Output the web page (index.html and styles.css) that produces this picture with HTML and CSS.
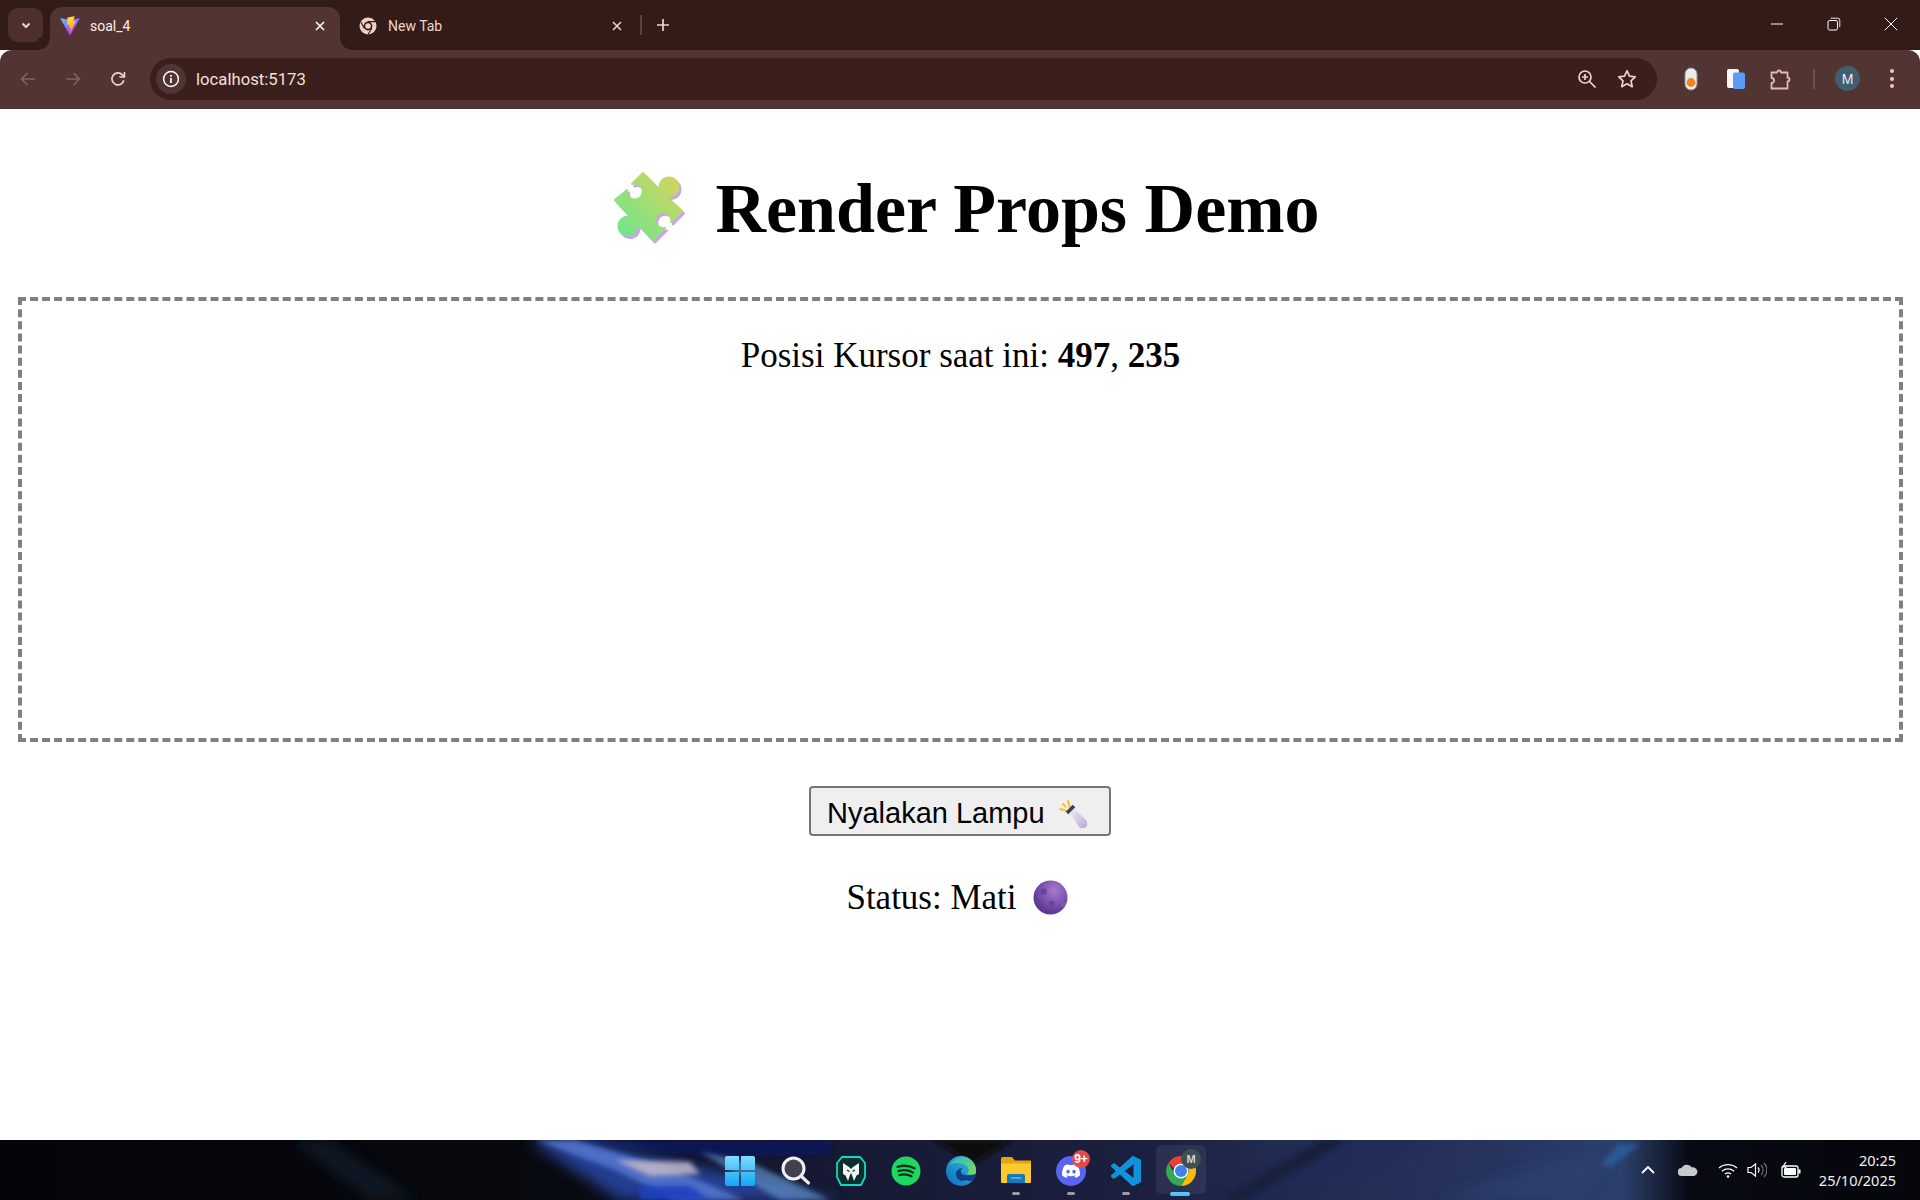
FILE: index.html
```html
<!DOCTYPE html>
<html lang="id">
<head>
<meta charset="utf-8">
<title>soal_4</title>
<link rel="stylesheet" href="styles.css">
</head>
<body>
<header class="browser">
  <div class="tabstrip">
    <button class="tabsearch" aria-label="Search tabs">
      <svg width="12" height="12" viewBox="0 0 12 12"><path d="M2.5 4.5 6 8l3.5-3.5" class="ic-light" stroke-width="2"/></svg>
    </button>
    <div class="tab tab-active">
      <svg class="favicon" width="20" height="20" viewBox="0 0 410 404"><defs><linearGradient id="va" x1="6" y1="33" x2="235" y2="344" gradientUnits="userSpaceOnUse"><stop stop-color="#41D1FF"/><stop offset="1" stop-color="#BD34FE"/></linearGradient><linearGradient id="vb" x1="194" y1="8" x2="236" y2="292" gradientUnits="userSpaceOnUse"><stop stop-color="#FFEA83"/><stop offset=".08" stop-color="#FFDD35"/><stop offset="1" stop-color="#FFA800"/></linearGradient></defs><path d="M399.641 59.5246L215.643 388.545C211.844 395.338 202.084 395.378 198.228 388.618L10.5817 59.5563C6.38087 52.1896 12.6802 43.2665 21.0281 44.7586L205.223 77.6824C206.398 77.8924 207.601 77.8904 208.776 77.6763L389.119 44.8058C397.439 43.2894 403.768 52.1434 399.641 59.5246Z" fill="url(#va)"/><path d="M292.965 1.5744L156.801 28.2552C154.563 28.6937 152.906 30.5903 152.771 32.8664L144.395 174.33C144.198 177.662 147.258 180.248 150.51 179.498L188.42 170.749C191.967 169.931 195.172 173.055 194.443 176.622L183.18 231.775C182.422 235.487 185.907 238.661 189.532 237.56L212.947 230.446C216.577 229.344 220.065 232.527 219.297 236.242L201.398 322.875C200.278 328.294 207.486 331.249 210.492 326.603L212.5 323.5L323.454 102.072C325.312 98.3645 322.108 94.137 318.036 94.9228L279.014 102.454C275.347 103.161 272.227 99.746 273.262 96.1583L298.731 7.86689C299.767 4.27314 296.636 0.855181 292.965 1.5744Z" fill="url(#vb)"/></svg>
      <span class="tab-title">soal_4</span>
      <svg width="12" height="12" viewBox="0 0 12 12"><path d="M2 2l8 8M10 2l-8 8" class="ic-white" stroke-width="1.6"/></svg>
    </div>
    <div class="tab tab-idle">
      <svg class="favicon" width="18" height="18" viewBox="0 0 18 18"><circle cx="9" cy="9" r="8.5" fill="#f0cfc4"/><circle cx="9" cy="9" r="4.4" fill="#331b18"/><circle cx="9" cy="9" r="2.8" fill="#f0cfc4"/><path d="M9 4.6h7.4M5.2 11.200 1.800 5M12.800 11.200 9 17.500" stroke="#331b18" stroke-width="1.100" fill="none"/></svg>
      <span class="tab-title tab-title-dim">New Tab</span>
      <svg width="12" height="12" viewBox="0 0 12 12"><path d="M2 2l8 8M10 2l-8 8" class="ic-light" stroke-width="1.6"/></svg>
    </div>
    <span class="tab-divider"></span>
    <svg class="newtab" width="14" height="14" viewBox="0 0 14 14"><path d="M7 1v12M1 7h12" class="ic-light" stroke-width="1.7"/></svg>
    <div class="winctl">
      <span class="winbtn"><svg width="14" height="14" viewBox="0 0 14 14"><path d="M1 7h12" class="ic-white" stroke-width="1"/></svg></span>
      <span class="winbtn"><svg width="14" height="14" viewBox="0 0 14 14"><rect x="1" y="3.5" width="9.5" height="9.5" rx="1.6" class="ic-white"/><path d="M3.6 1.2h7.2a2 2 0 0 1 2 2v7" class="ic-white" stroke-width=".9"/></svg></span>
      <span class="winbtn"><svg width="14" height="14" viewBox="0 0 14 14"><path d="M.8.8l12.4 12.4M13.2.8.8 13.2" class="ic-white" stroke-width="1"/></svg></span>
    </div>
  </div>
  <div class="toolbar">
    <span class="navbtn"><svg width="18" height="18" viewBox="0 0 18 18"><path d="M16 9H3M8.5 3 2.6 9l5.9 6" class="ic-dim" stroke-width="1.7"/></svg></span>
    <span class="navbtn"><svg width="18" height="18" viewBox="0 0 18 18"><path d="M2 9h13M9.5 3l5.9 6-5.9 6" class="ic-dim" stroke-width="1.7"/></svg></span>
    <span class="navbtn"><svg width="18" height="18" viewBox="0 0 18 18"><path d="M14.8 10.2A6 6 0 1 1 13.3 4.8L15 6.6" class="ic-light" stroke-width="1.7"/><path d="M15.4 2v5h-5" class="ic-light" stroke-width="1.7"/></svg></span>
    <div class="omnibox">
      <span class="siteinfo"><svg width="18" height="18" viewBox="0 0 18 18"><circle cx="9" cy="9" r="7.4" class="ic-white" stroke-width="1.5"/><path d="M9 8v5M9 5v1.8" class="ic-white" stroke-width="1.7"/></svg></span>
      <span class="url">localhost:5173</span>
      <span class="omni-ic"><svg width="20" height="20" viewBox="0 0 20 20"><circle cx="8" cy="8" r="6" class="ic-light" stroke-width="1.7"/><path d="M12.5 12.5 18.5 18.5M5 8h6M8 5v6" class="ic-light" stroke-width="1.7"/></svg></span>
      <span class="omni-ic"><svg width="20" height="20" viewBox="0 0 20 20"><path d="M10 1.8l2.5 5.4 5.8.7-4.3 4 1.2 5.8-5.2-2.9-5.2 2.9 1.2-5.8-4.3-4 5.8-.7z" class="ic-light" stroke-width="1.7" stroke-linejoin="round"/></svg></span>
    </div>
    <span class="ext ext-first"><svg width="14" height="24" viewBox="0 0 14 24"><rect x="1" y="1" width="12" height="22" rx="6" fill="#ececec" stroke="#8b9a9e"/><circle cx="7" cy="15.5" r="4.4" fill="#f58220"/></svg></span>
    <span class="ext"><svg width="18" height="20" viewBox="0 0 18 20"><rect x="0" y="0" width="12" height="19" rx="2" fill="#f8f8fa"/><rect x="6" y="3.5" width="12" height="16.5" rx="2" fill="#5a9bf6"/></svg></span>
    <span class="ext"><svg width="22" height="22" viewBox="0 0 22 22"><path d="M1.5 4.5h5.5a2 2 0 0 1 4 0h6.5v5a2 2 0 0 1 0 4v7h-16v-5.5a2.5 2.5 0 0 0 0-5z" class="ic-pink" stroke-width="1.8" stroke-linejoin="round"/></svg></span>
    <span class="tb-divider"></span>
    <span class="avatar">M</span>
    <span class="menu-dots"><i></i><i></i><i></i></span>
  </div>
</header>

<main class="page">
  <h1 class="title">
    <svg class="puzzle" viewBox="14 12 72 72" aria-hidden="true"><defs><linearGradient id="pz" x1="0" y1="1" x2="1" y2="0"><stop offset="0" stop-color="#64e88f"/><stop offset="1" stop-color="#dcd35a"/></linearGradient></defs><path class="pz-shadow" d="M43 13 60 30A9.500 9.500 0 1 1 66 36L82 51 71 62A8 8 0 1 0 65 68L53 80 37 63A9.500 9.500 0 1 1 31 57L15 40 27 30A8 8 0 1 0 32 24Z"/><path class="pz-face" d="M43 13 60 30A9.500 9.500 0 1 1 66 36L82 51 71 62A8 8 0 1 0 65 68L53 80 37 63A9.500 9.500 0 1 1 31 57L15 40 27 30A8 8 0 1 0 32 24Z"/></svg>
    <span>Render Props Demo</span>
  </h1>
  <section class="tracker">
    <p class="cursor">Posisi Kursor saat ini: <strong>497</strong>, <strong>235</strong></p>
  </section>
  <button class="lamp">Nyalakan Lampu
    <svg class="torch" viewBox="0 0 30 30" aria-hidden="true"><defs><linearGradient id="tg" x1="0" y1="0" x2="1" y2="1"><stop offset="0" stop-color="#f5f0f8"/><stop offset="1" stop-color="#b9a8d0"/></linearGradient></defs><path d="M11 3l2 7M3 11l7 2" stroke="#fbbf2d" stroke-width="2" fill="none" stroke-linecap="round"/><path d="M5.500 5.500 9 9" stroke="#fbbf2d" stroke-width="2"/><path d="M12 13l4-4 13 13a3 3 0 0 1-7 7z" fill="url(#tg)"/><path d="M10 15 17 8" stroke="#473a5c" stroke-width="3.600"/></svg>
  </button>
  <p class="status">Status: Mati
    <svg class="moon" viewBox="0 0 36 36" aria-hidden="true"><defs><radialGradient id="mg" cx=".62" cy=".3" r=".8"><stop offset="0" stop-color="#a67ad0"/><stop offset=".6" stop-color="#7149a6"/><stop offset="1" stop-color="#4d2f82"/></radialGradient></defs><circle cx="18" cy="18" r="17.500" fill="url(#mg)"/><circle cx="11" cy="12" r="3.200" fill="#6a449c"/><circle cx="19" cy="24" r="3" fill="#6a449c"/><circle cx="24" cy="6" r="1.800" fill="#9a70c4"/><circle cx="31" cy="25" r="2.500" fill="#805aac"/><circle cx="9" cy="25" r="1.600" fill="#63409a"/></svg>
  </p>
</main>

<footer class="taskbar">
  <svg class="wallpaper" width="1920" height="60" viewBox="0 0 1920 60" aria-hidden="true">
    <defs>
      <linearGradient id="wb" x1="0" y1="0" x2="1" y2="0">
        <stop offset="0" stop-color="#04050a"/><stop offset=".27" stop-color="#07090f"/><stop offset=".33" stop-color="#0b0d18"/><stop offset=".4" stop-color="#15182f"/><stop offset=".6" stop-color="#1c2040"/><stop offset=".66" stop-color="#212a50"/><stop offset=".78" stop-color="#273460"/><stop offset=".845" stop-color="#2c406c"/><stop offset=".88" stop-color="#080a14"/><stop offset="1" stop-color="#05060b"/>
      </linearGradient>
      <filter id="b2" x="-20%" y="-50%" width="140%" height="200%"><feGaussianBlur stdDeviation="2.500"/></filter>
      <filter id="b6" x="-30%" y="-100%" width="160%" height="300%"><feGaussianBlur stdDeviation="7"/></filter>
    </defs>
    <rect width="1920" height="60" fill="url(#wb)"/>
    <path d="M290 0h40l90 60h-50z" fill="#0c1520" filter="url(#b6)"/>
    <path d="M566 0H830V14L720 18Z" fill="#0b1254" filter="url(#b2)"/>
    <path d="M528 0h60L840 60H620Z" fill="#2a4cb0" opacity=".8" filter="url(#b6)"/>
    <path d="M535 0h40l100 30 70 30h-70l-60-30Z" fill="#5b7fd8" opacity=".75" filter="url(#b2)"/>
    <path d="M615 20 690 22 700 34 650 36Z" fill="#c4b8c8" opacity=".85" filter="url(#b2)"/>
    <path d="M700 12l50 10 80 38h-50l-50-30z" fill="#6aa0d8" opacity=".6" filter="url(#b2)"/>
    <path d="M640 46l50 0 20 14h-70z" fill="#1b3fc0" opacity=".9" filter="url(#b2)"/>
    <path d="M933 0h80l-40 24z" fill="#08080e" filter="url(#b2)"/>
    <path d="M1325 0h24l-100 60h-30z" fill="#161a32" filter="url(#b2)"/>
    <path d="M1220 60 1340 0h90l-160 60z" fill="#1a2a56" opacity=".5" filter="url(#b6)"/>
    <path d="M1600 24 1620 4h20l-30 24z" fill="#2c5a98" filter="url(#b2)"/>
    <path d="M1440 60 1560 20h50l-30 40z" fill="#2d4270" opacity=".7" filter="url(#b6)"/>
  </svg>
  <div class="apps">
    <span class="app"><svg width="30" height="30" viewBox="0 0 30 30"><defs><linearGradient id="wn" x1="0" y1="0" x2="0" y2="1"><stop offset="0" stop-color="#7fdcff"/><stop offset="1" stop-color="#10a6f7"/></linearGradient></defs><path fill="url(#wn)" d="M2 0h12v14H0V2a2 2 0 0 1 2-2zM16 0h12a2 2 0 0 1 2 2v12H16zM0 16h14v14H2a2 2 0 0 1-2-2zM16 16h14v12a2 2 0 0 1-2 2H16z"/></svg><i class="dot dot-none"></i></span>
    <span class="app"><svg width="30" height="30" viewBox="0 0 30 30"><circle cx="12.500" cy="12.500" r="10.500" fill="#40404e" stroke="#f0f0f0" stroke-width="3"/><path d="M20 20l7.500 7" stroke="#e8e8e8" stroke-width="3.200" stroke-linecap="round"/></svg><i class="dot dot-none"></i></span>
    <span class="app"><svg width="30" height="30" viewBox="0 0 30 30"><path d="M6 1h18l5 6v14l-4 8H5l-4-8V7z" fill="#0a2e2c" stroke="#0fd8c8" stroke-width="1.800"/><path d="M7 7l6 4 2 2 2-2 6-4v11l-2.500 1.500L18 25l-2-6-1-2-1 2-2 6-2.500-5.500L7 18z" fill="#f0f4f2"/><path d="M11 14l2.500 1.500M19 14l-2.500 1.500" stroke="#0a2e2c" stroke-width="1.200"/></svg><i class="dot dot-none"></i></span>
    <span class="app"><svg width="30" height="30" viewBox="0 0 30 30"><circle cx="15" cy="15" r="14.500" fill="#1ed760"/><path d="M6.500 10.800c6-1.800 12-1.200 17 1.500M7.500 15c5-1.400 10-.9 14.500 1.400M8.500 19c4-1 8.500-.6 12 1.300" fill="none" stroke="#10311c" stroke-width="2.300" stroke-linecap="round"/></svg><i class="dot dot-none"></i></span>
    <span class="app"><svg width="30" height="30" viewBox="0 0 30 30"><defs><linearGradient id="eg" x1="0" y1="1" x2="1" y2="0"><stop offset="0" stop-color="#0c6cc0"/><stop offset="1" stop-color="#36bfe0"/></linearGradient><linearGradient id="eg2" x1="0" y1="0" x2="1" y2="1"><stop offset="0" stop-color="#2fb6d6"/><stop offset="1" stop-color="#7fdb4e"/></linearGradient></defs><circle cx="15" cy="15" r="15" fill="url(#eg)"/><path d="M4 9C8 1 20-2 27 6c3 3.500 3.500 8 3 11-2 2-6 2-9 1 3-3 2-8-3-9.500C12 6 6 7 4 9z" fill="url(#eg2)"/><path d="M21 24c-5 2-11 .5-11-6 0-3 3-6 7-6-3 1.500-3 5 0 6.500 3 1.300 9 1 13-.5-1 4-5 9.500-9 6z" fill="#0e3f86"/></svg><i class="dot dot-none"></i></span>
    <span class="app"><svg width="30" height="30" viewBox="0 0 30 30"><path d="M0 2.500A1.500 1.500 0 0 1 1.500 1H11l3 3.500h16V12H0z" fill="#e2a50f"/><path d="M0 7.500h30V26a1 1 0 0 1-1 1H1a1 1 0 0 1-1-1z" fill="#fcc92f"/><path d="M6 20a2 2 0 0 1 2-2h14a2 2 0 0 1 2 2v7H6z" fill="#1579bd"/><path d="M10 22h10" stroke="#7fc0ea" stroke-width="1.200"/></svg><i class="dot"></i></span>
    <span class="app"><svg width="30" height="30" viewBox="0 0 30 30"><circle cx="15" cy="15" r="15" fill="#5865f2"/><svg x="6" y="6" width="18" height="18" viewBox="0 0 24 24"><path fill="#fff" d="M20.317 4.3698a19.7913 19.7913 0 00-4.8851-1.5152.0741.0741 0 00-.0785.0371c-.211.3753-.4447.8648-.6083 1.2495-1.8447-.2762-3.68-.2762-5.4868 0-.1636-.3933-.4058-.8742-.6177-1.2495a.077.077 0 00-.0785-.037 19.7363 19.7363 0 00-4.8852 1.515.0699.0699 0 00-.0321.0277C.5334 9.0458-.319 13.5799.0992 18.0578a.0824.0824 0 00.0312.0561c2.0528 1.5076 4.0413 2.4228 5.9929 3.0294a.0777.0777 0 00.0842-.0276c.4616-.6304.8731-1.2952 1.226-1.9942a.076.076 0 00-.0416-.1057c-.6528-.2476-1.2743-.5495-1.8722-.8923a.077.077 0 01-.0076-.1277c.1258-.0943.2517-.1923.3718-.2914a.0743.0743 0 01.0776-.0105c3.9278 1.7933 8.18 1.7933 12.0614 0a.0739.0739 0 01.0785.0095c.1202.099.246.1981.3728.2924a.077.077 0 01-.0066.1276 12.2986 12.2986 0 01-1.873.8914.0766.0766 0 00-.0407.1067c.3604.698.7719 1.3628 1.225 1.9932a.076.076 0 00.0842.0286c1.961-.6067 3.9495-1.5219 6.0023-3.0294a.077.077 0 00.0313-.0552c.5004-5.177-.8382-9.6739-3.5485-13.6604a.061.061 0 00-.0312-.0286zM8.02 15.3312c-1.1825 0-2.1569-1.0857-2.1569-2.419 0-1.3332.9555-2.4189 2.157-2.4189 1.2108 0 2.1757 1.0952 2.1568 2.419 0 1.3332-.9555 2.4189-2.1569 2.4189zm7.9748 0c-1.1825 0-2.1569-1.0857-2.1569-2.419 0-1.3332.9554-2.4189 2.1569-2.4189 1.2108 0 2.1757 1.0952 2.1568 2.419 0 1.3332-.946 2.4189-2.1568 2.4189Z"/></svg></svg><span class="badge">9+</span><i class="dot"></i></span>
    <span class="app"><svg width="30" height="30" viewBox="0 0 24 24"><path fill="#0f94dc" d="M23.15 2.587L18.21.21a1.494 1.494 0 0 0-1.705.29l-9.46 8.63-4.12-3.128a.999.999 0 0 0-1.276.057L.327 7.261A1 1 0 0 0 .326 8.74L3.899 12 .326 15.26a1 1 0 0 0 .001 1.479L1.65 17.94a.999.999 0 0 0 1.276.057l4.12-3.128 9.46 8.63a1.492 1.492 0 0 0 1.704.29l4.942-2.377A1.5 1.5 0 0 0 24 20.06V3.939a1.5 1.500 0 0 0-.85-1.352zm-5.146 14.861L10.826 12l7.178-5.448v10.896z"/></svg><i class="dot"></i></span>
    <span class="app app-active"><svg width="30" height="30" viewBox="0 0 30 30"><path d="M15 0a15 15 0 0 1 13 7.500H15a7.500 7.500 0 0 0-7 4.800L2.500 7A15 15 0 0 1 15 0z" fill="#e94235"/><path d="M28 7.500A15 15 0 0 1 15 30l6.500-11.300A7.500 7.500 0 0 0 20.500 9z" fill="#fbbc04"/><path d="M15 30A15 15 0 0 1 2.500 7L9 18.700a7.500 7.500 0 0 0 12.500 0z" fill="#34a853"/><circle cx="15" cy="15" r="7.500" fill="#fff"/><circle cx="15" cy="15" r="6" fill="#3b82f0"/></svg><span class="chrome-badge">M</span><i class="dot dot-active"></i></span>
  </div>
  <div class="tray">
    <svg class="tray-chevron" width="14" height="8" viewBox="0 0 14 8"><path d="M1 7l6-6 6 6" class="ic-white" stroke-width="1.800"/></svg>
    <svg class="tray-cloud" width="20" height="12" viewBox="0 0 20 12"><path d="M4 12a4 4 0 0 1-.5-8A6 6 0 0 1 14 3.500a4.300 4.300 0 0 1 2 8.500z" fill="#c9c9c9"/></svg>
    <svg class="tray-wifi" width="20" height="15" viewBox="0 0 20 15"><path d="M1 5c5-4.500 13-4.500 18 0M4 8.200c3.500-3 8.500-3 12 0M7 11c1.800-1.300 4.200-1.300 6 0" class="ic-white" stroke-width="1.300"/><circle cx="10" cy="13.500" r="1.300" fill="#fff"/></svg>
    <svg class="tray-vol" width="20" height="16" viewBox="0 0 20 16"><path d="M1 5.500h3L8.500 2v12L4 10.500H1z" class="ic-white" stroke-width="1.200"/><path d="M11 5.500a3.500 3.500 0 0 1 0 5" class="ic-white" stroke-width="1.200"/><path d="M14 3a7 7 0 0 1 0 10M17 1a10 10 0 0 1 0 14" class="ic-grey" stroke-width="1.100"/></svg>
    <svg class="tray-batt" width="20" height="16" viewBox="0 0 20 16"><rect x="1" y="4" width="16" height="11" rx="2" class="ic-white" stroke-width="1.300"/><rect x="3" y="6" width="12" height="7" rx="1" fill="#fff"/><rect x="17.500" y="7.500" width="2" height="4" fill="#fff"/><path d="M5 0 2 5h3L4 8" class="ic-white" stroke-width="1.200"/></svg>
    <div class="clock"><span>20:25</span><span>25/10/2025</span></div>
  </div>
</footer>
</body>
</html>
```
FILE: styles.css
```css
* { box-sizing: border-box; }
html, body { margin: 0; height: 100%; }
body {
  display: flex;
  flex-direction: column;
  height: 1200px;
  overflow: hidden;
  background: #fff;
  color: #000;
  font-family: "Liberation Serif", serif;
}
svg { display: block; flex: none; }
.ic-white, .ic-light, .ic-dim, .ic-pink, .ic-grey { fill: none; }
.ic-white { stroke: #fff; }
.ic-light { stroke: #f0d3c8; }
.ic-dim { stroke: #7d6461; }
.ic-pink { stroke: #e6b8ae; }
.ic-grey { stroke: #77777c; }

/* browser chrome */
.browser { flex: none; font-family: Roboto, "Liberation Sans", sans-serif; }
.tabstrip {
  display: flex;
  align-items: flex-end;
  height: 50px;
  background: #331b18;
}
.tabsearch {
  align-self: flex-start;
  display: flex;
  align-items: center;
  justify-content: center;
  width: 35px;
  height: 34px;
  margin: 8px 7px 0 8px;
  padding: 0;
  border: 0;
  border-radius: 10px;
  background: #4d302d;
}
.tab {
  display: flex;
  align-items: center;
  width: 290px;
  height: 43px;
  padding-bottom: 6px;
  font-size: 14px;
  position: relative;
}
.tab-active {
  padding-left: 10px;
  padding-right: 14px;
  gap: 10px;
  border-radius: 12px 12px 0 0;
  background: #523533;
  color: #fdeee8;
}
.tab-active::before, .tab-active::after {
  content: "";
  position: absolute;
  bottom: 0;
  width: 12px;
  height: 12px;
}
.tab-active::before {
  left: -12px;
  background: radial-gradient(circle at 0 0, #331b18 11.500px, #523533 12px);
}
.tab-active::after {
  right: -12px;
  background: radial-gradient(circle at 100% 0, #331b18 11.500px, #523533 12px);
}
.tab-idle { padding-left: 19px; padding-right: 7px; gap: 11px; color: #f0d3c8; }
.tab-title { flex: 1; }
.tab-divider {
  align-self: flex-start;
  width: 2px;
  height: 20px;
  margin: 15px 0 0 10px;
  background: #5c403d;
}
.newtab { align-self: flex-start; margin: 18px 0 0 14px; }
.winctl { display: flex; margin-left: auto; align-self: flex-start; padding-right: 1px; }
.winbtn {
  display: flex;
  align-items: center;
  justify-content: center;
  width: 57px;
  height: 47px;
}

.toolbar {
  display: flex;
  align-items: center;
  height: 59px;
  padding: 0 0 0 5px;
  border-bottom: 2px solid #4b3634;
  border-radius: 12px 12px 0 0;
  background: #523533;
}
.navbtn { display: flex; justify-content: center; width: 45px; }
.omnibox {
  display: flex;
  align-items: center;
  width: 1507px;
  height: 42px;
  margin-left: 10px;
  padding: 0 10px 0 6px;
  border-radius: 21px;
  background: #3a1f1d;
}
.siteinfo {
  display: flex;
  align-items: center;
  justify-content: center;
  width: 30px;
  height: 30px;
  border-radius: 50%;
  background: #523533;
}
.url { flex: 1; margin-left: 10px; padding-top: 2px; font-size: 16.700px; color: #f6e0d4; }
.omni-ic { display: flex; justify-content: center; width: 40px; }
.ext { display: flex; justify-content: center; width: 45px; }
.ext-first { margin-left: 11px; }
.tb-divider { width: 2px; height: 20px; margin: 0 0 0 10px; background: #6d5250; }
.avatar {
  display: flex;
  align-items: center;
  justify-content: center;
  width: 25px;
  height: 25px;
  margin-left: 20px;
  border-radius: 50%;
  background: #3f5f6f;
  color: #e8eef0;
  font-family: "Liberation Sans", sans-serif;
  font-size: 14px;
}
.menu-dots {
  display: flex;
  flex-direction: column;
  gap: 3.500px;
  margin-left: 30px;
}
.menu-dots i { width: 4px; height: 4px; border-radius: 50%; background: #f0c8bc; }

/* page */
.page {
  flex: 1;
  display: flex;
  flex-direction: column;
  align-items: center;
  padding-top: 59px;
}
.title {
  display: flex;
  align-items: center;
  gap: 29px;
  margin: 0 0 48px;
  padding-left: 14px;
  font-size: 70px;
  font-weight: bold;
  line-height: 81px;
}
.puzzle { width: 72px; height: 72px; margin-top: -1px; }
.pz-shadow {
  fill: #c9a3ec;
  stroke: #c9a3ec;
  stroke-width: 2;
  stroke-linejoin: round;
  transform: translate(2px, 2.500px);
}
.pz-face {
  fill: url(#pz);
  stroke: url(#pz);
  stroke-width: 2;
  stroke-linejoin: round;
}
.tracker {
  align-self: stretch;
  height: 445px;
  margin: 0 17px 44px 18px;
  padding-top: 35px;
  border: 4px dashed #808080;
  text-align: center;
}
.cursor { margin: 0; font-size: 35px; }
.lamp {
  display: flex;
  align-items: center;
  gap: 12px;
  width: 302px;
  height: 50px;
  margin: 0 0 42px;
  padding: 4px 0 0 16px;
  border: 2px solid #767676;
  border-radius: 4px;
  background: #efefef;
  color: #000;
  font-family: "Liberation Sans", sans-serif;
  font-size: 29px;
}
.torch { width: 30px; height: 30px; }
.status {
  display: flex;
  align-items: center;
  gap: 16px;
  margin: 0;
  padding-right: 6px;
  font-size: 35px;
}
.moon { width: 35px; height: 35px; margin-top: -2px; }

/* taskbar */
.taskbar {
  position: relative;
  flex: none;
  display: flex;
  height: 60px;
  color: #fff;
  background: #05060b;
}
.wallpaper { position: absolute; top: 0; left: 0; }
.apps { position: relative; display: flex; margin-left: 713px; }
.app {
  position: relative;
  display: flex;
  flex-direction: column;
  align-items: center;
  width: 55px;
  padding-top: 16px;
}
.app:first-child svg { left: -1px; }
.app-active::before {
  content: "";
  position: absolute;
  top: 5px;
  left: 3px;
  width: 50px;
  height: 49px;
  border-radius: 6px;
  background: rgba(255,255,255,.07);
}
.app svg { position: relative; }
.dot { width: 8px; height: 3px; margin-top: 6px; border-radius: 2px; background: #9a9aa4; }
.dot-none { background: transparent; }
.dot-active { width: 20px; height: 4px; background: #4cc2ff; margin-left: -1px; }
.badge {
  position: absolute;
  top: 10px;
  left: 29px;
  width: 18px;
  height: 18px;
  border-radius: 50%;
  background: #e5484d;
  color: #fff;
  font: bold 12px/18px "Liberation Sans", sans-serif;
  text-align: center;
}
.chrome-badge {
  position: absolute;
  top: 9px;
  left: 28px;
  width: 20px;
  height: 20px;
  border-radius: 50%;
  background: #3f4f55;
  color: #cfd6d8;
  font: bold 11px/20px "Liberation Sans", sans-serif;
  text-align: center;
}
.tray {
  position: relative;
  display: flex;
  align-items: center;
  flex: 1;
  font-family: "Noto Sans", sans-serif;
  font-size: 14.500px;
  padding-right: 24px;
}
.tray-chevron { margin-left: 433px; }
.tray-cloud { margin-left: 23px; }
.tray-wifi { margin-left: 20px; }
.tray-vol { margin-left: 9px; }
.tray-batt { margin-left: 14px; }
.clock {
  display: flex;
  flex-direction: column;
  align-items: flex-end;
  margin-left: auto;
  line-height: 20px;
  color: #f2f2f2;
}
```
